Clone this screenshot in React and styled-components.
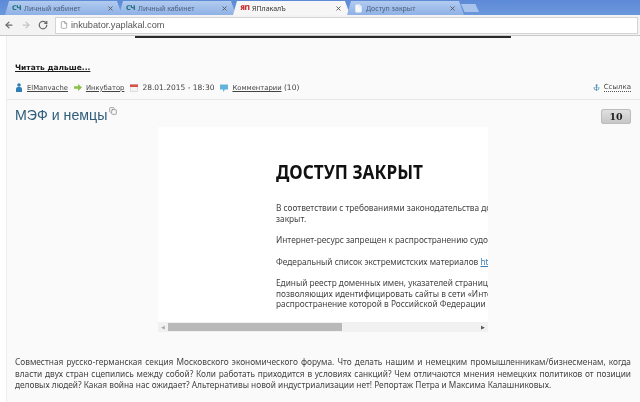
import React from 'react';
import styled, { createGlobalStyle } from 'styled-components';
import { ArrowLeft, ArrowRight, RotateCw, File, X, Anchor, Copy } from 'lucide-react';

const GlobalStyle = createGlobalStyle`
  html, body { margin: 0; padding: 0; background: #fff; }
  body { width: 640px; height: 402px; overflow: hidden; font-family: "DejaVu Sans", sans-serif; }
`;

const Browser = styled.div`
  width: 640px;
  height: 402px;
  display: flex;
  flex-direction: column;
  overflow: hidden;
  filter: blur(0.35px);
`;

const TabStrip = styled.div`
  height: 15px;
  flex: none;
  display: flex;
  align-items: flex-end;
  padding-left: 5px;
  background: linear-gradient(#5d8ad6, #6b97dc);
`;

const Tab = styled.div`
  width: 117px;
  height: 14px;
  flex: none;
  margin-right: -3px;
  padding: 0 8px 0 7px;
  box-sizing: border-box;
  display: flex;
  align-items: center;
  gap: 3px;
  clip-path: polygon(4px 0, calc(100% - 5px) 0, 100% 100%, 0 100%);
  background: ${(p) => (p.$active ? '#f6f6f6' : 'linear-gradient(#b2cbef, #8fb1e6)')};
  color: ${(p) => (p.$active ? '#333' : '#4b5f7c')};
  font: 7px "Noto Sans", sans-serif;
`;

const TabTitle = styled.span`
  flex: 1;
  white-space: nowrap;
  overflow: hidden;
`;

const NewTab = styled.div`
  width: 18px;
  height: 8px;
  margin: 0 0 3px 0;
  background: #a9c4ec;
  clip-path: polygon(0 0, 80% 0, 100% 100%, 20% 100%);
`;

const Favicon = styled.span`
  flex: none;
  width: 9px;
  text-align: center;
  font: bold 6.5px/8px "DejaVu Sans", sans-serif;
  letter-spacing: -0.6px;
  white-space: nowrap;
  color: ${(p) => p.$color};
`;

const Toolbar = styled.div`
  height: 20px;
  flex: none;
  display: flex;
  align-items: center;
  gap: 7px;
  padding: 0 2px 0 4px;
  box-sizing: border-box;
  background: #f3f3f3;
  color: #6a6a6a;
`;

const Omnibox = styled.div`
  flex: 1;
  height: 15px;
  display: flex;
  align-items: center;
  gap: 3px;
  padding-left: 4px;
  background: #fff;
  border: 1px solid #d4d4d4;
  font: 9.2px "Liberation Sans", sans-serif;
  color: #555;
`;

const Page = styled.div`
  flex: 1;
  min-height: 0;
  display: flex;
  background: #fff;
  border-top: 1px solid #c9c9c9;
`;

const Article = styled.div`
  flex: 1;
  margin-left: 6px;
  padding: 0 9px 0 8px;
  background: #fafafa;
  border-left: 1px solid #eeeeee;
  display: flex;
  flex-direction: column;
`;

const TopRule = styled.div`
  width: 376px;
  height: 2px;
  flex: none;
  margin-left: 120px;
  background: #2a2a2a;
`;

const ReadMore = styled.a`
  margin-top: 24px;
  font: bold 7.5px/12px "DejaVu Sans", sans-serif;
  text-decoration: underline;
  color: #1c1c1c;
`;

const MetaRow = styled.div`
  flex: none;
  margin: 7px -9px 0 -8px;
  padding: 0 9px 5px 8px;
  height: 13px;
  display: flex;
  align-items: center;
  border-bottom: 1px solid #e6e6e6;
  font: 7.5px "DejaVu Sans", sans-serif;
  color: #444;
`;

const MetaItem = styled.span`
  display: flex;
  align-items: center;
  gap: 4px;
  margin-right: 6px;
  white-space: nowrap;
`;

const MetaLink = styled.a`
  font-size: 6.8px;
  text-decoration: underline;
  color: #444;
`;

const Permalink = styled.span`
  margin-left: auto;
  display: flex;
  align-items: center;
  gap: 4px;
  font-size: 7px;
  color: #444;
`;

const DottedLink = styled.a`
  border-bottom: 1px dotted #555;
`;

const TitleRow = styled.div`
  height: 27px;
  flex: none;
  padding-top: 2px;
  box-sizing: border-box;
  display: flex;
  align-items: center;
  justify-content: space-between;
`;

const Title = styled.h2`
  margin: 0;
  display: flex;
  align-items: flex-start;
  gap: 2px;
  font: 400 14.2px "Liberation Sans", sans-serif;
  color: #2f5d7c;
`;

const Rating = styled.div`
  width: 30px;
  height: 15px;
  margin-top: 4px;
  border-radius: 3px;
  background: linear-gradient(#e2e2e2, #c4c4c4);
  box-shadow: inset 0 0 0 1px #bdbdbd;
  text-align: center;
  font: bold 9.5px/15px "DejaVu Serif", serif;
  color: #222;
`;

const Frame = styled.div`
  width: 330px;
  height: 205px;
  flex: none;
  margin-left: 143px;
  display: flex;
  flex-direction: column;
  background: #fff;
`;

const FrameBody = styled.div`
  flex: 1;
  min-height: 0;
  overflow: hidden;
  padding: 32px 0 0 118px;
`;

const Closed = styled.h1`
  margin: 0 0 18px;
  font: bold 20px/26px "Noto Sans", sans-serif;
  transform: scaleX(0.86);
  transform-origin: left center;
  color: #111;
  white-space: nowrap;
`;

const FrameText = styled.p`
  margin: 0 0 ${(p) => p.$gap ?? 11}px;
  font: 8.3px/10.5px "Noto Sans", sans-serif;
  color: #444;
  white-space: nowrap;
`;

const FrameLink = styled.span`
  color: #3a7fb8;
  text-decoration: underline;
`;

const Scrollbar = styled.div`
  height: 10px;
  flex: none;
  display: flex;
  align-items: center;
  background: #f1f1f1;
`;

const Arrow = styled.span`
  width: 10px;
  flex: none;
  text-align: center;
  font-size: 5px;
  color: ${(p) => p.$color};
`;

const Thumb = styled.div`
  width: 174px;
  height: 8px;
  background: #b9b9b9;
`;

const Track = styled.div`
  flex: 1;
`;

const Summary = styled.div`
  flex: none;
  margin-top: 24px;
  font: 8.3px/11.5px "Noto Sans", sans-serif;
  color: #444;
`;

const SummaryLine = styled.span`
  display: block;
  text-align: ${(p) => (p.$last ? 'left' : 'justify')};
  text-align-last: ${(p) => (p.$last ? 'left' : 'justify')};
`;

const iconProps = { size: 10, strokeWidth: 3 };

const PersonIcon = () => (
  <svg width="8" height="9" viewBox="0 0 8 9" fill="#2e7fb8">
    <circle cx="4" cy="2" r="1.8" />
    <path d="M1 9 V6 Q1 4 3 4 H5 Q7 4 7 6 V9 Z" />
  </svg>
);

const MoveIcon = () => (
  <svg width="8" height="7" viewBox="0 0 8 7" fill="#8cc04a">
    <path d="M0 2.2 H4 V0 L8 3.5 L4 7 V4.8 H0 Z" />
  </svg>
);

const CalendarIcon = () => (
  <svg width="8" height="8" viewBox="0 0 8 8">
    <rect x="0.5" y="0.5" width="7" height="7" fill="#f4f4f4" stroke="#ccc" strokeWidth="0.6" />
    <rect x="0" y="0.5" width="8" height="2.5" fill="#d8504a" />
  </svg>
);

const BubbleIcon = () => (
  <svg width="8" height="8" viewBox="0 0 8 8" fill="#62b4dc">
    <path d="M0 0.5 H8 V5.5 H5 L3 8 V5.5 H0 Z" />
  </svg>
);

function BrowserTab({ active, title, icon }) {
  return (
    <Tab $active={active}>
      {icon}
      <TabTitle>{title}</TabTitle>
      <X size={7} strokeWidth={3} color="#555" />
    </Tab>
  );
}

export default function App() {
  const cabinet = <Favicon $color="#1d6e78">СЧ</Favicon>;
  return (
    <Browser>
      <GlobalStyle />
      <TabStrip>
        <BrowserTab title="Личный кабинет" icon={cabinet} />
        <BrowserTab title="Личный кабинет" icon={cabinet} />
        <BrowserTab active title="ЯПлакалЪ" icon={<Favicon $color="#c4201f">ЯП</Favicon>} />
        <BrowserTab title="Доступ закрыт" icon={<File size={9} color="#dfe8f6" fill="#f4f7fc" />} />
        <NewTab />
      </TabStrip>
      <Toolbar>
        <ArrowLeft {...iconProps} />
        <ArrowRight {...iconProps} color="#c4c4c4" />
        <RotateCw {...iconProps} />
        <Omnibox>
          <File size={8} color="#888" />
          inkubator.yaplakal.com
        </Omnibox>
      </Toolbar>
      <Page>
        <Article>
          <TopRule />
          <ReadMore>Читать дальше...</ReadMore>
          <MetaRow>
            <MetaItem>
              <PersonIcon />
              <MetaLink>ElManvache</MetaLink>
            </MetaItem>
            <MetaItem>
              <MoveIcon />
              <MetaLink>Инкубатор</MetaLink>
            </MetaItem>
            <MetaItem>
              <CalendarIcon />
              28.01.2015 - 18:30
            </MetaItem>
            <MetaItem>
              <BubbleIcon />
              <span>
                <MetaLink>Комментарии</MetaLink> (10)
              </span>
            </MetaItem>
            <Permalink>
              <Anchor size={7} color="#3c8aa8" strokeWidth={2.5} />
              <DottedLink>Ссылка</DottedLink>
            </Permalink>
          </MetaRow>
          <TitleRow>
            <Title>
              МЭФ и немцы
              <Copy size={8} color="#777" />
            </Title>
            <Rating>10</Rating>
          </TitleRow>
          <Frame>
            <FrameBody>
              <Closed>ДОСТУП ЗАКРЫТ</Closed>
              <FrameText>
                В соответствии с требованиями законодательства до
                <br />
                закрыт.
              </FrameText>
              <FrameText>Интернет-ресурс запрещен к распространению судо</FrameText>
              <FrameText>
                Федеральный список экстремистских материалов <FrameLink>htt</FrameLink>
              </FrameText>
              <FrameText $gap={0}>
                Единый реестр доменных имен, указателей страниц
                <br />
                позволяющих идентифицировать сайты в сети «Инте
                <br />
                распространение которой в Российской Федерации з
              </FrameText>
            </FrameBody>
            <Scrollbar>
              <Arrow $color="#aaa">◀</Arrow>
              <Thumb />
              <Track />
              <Arrow $color="#555">▶</Arrow>
            </Scrollbar>
          </Frame>
          <Summary>
            <SummaryLine>
              Совместная русско-германская секция Московского экономического форума. Что делать нашим и немецким
              промышленникам/бизнесменам, когда
            </SummaryLine>
            <SummaryLine>
              власти двух стран сцепились между собой? Коли работать приходится в условиях санкций? Чем отличаются
              мнения немецких политиков от позиции
            </SummaryLine>
            <SummaryLine $last>
              деловых людей? Какая война нас ожидает? Альтернативы новой индустриализации нет! Репортаж Петра и Максима
              Калашниковых.
            </SummaryLine>
          </Summary>
        </Article>
      </Page>
    </Browser>
  );
}
